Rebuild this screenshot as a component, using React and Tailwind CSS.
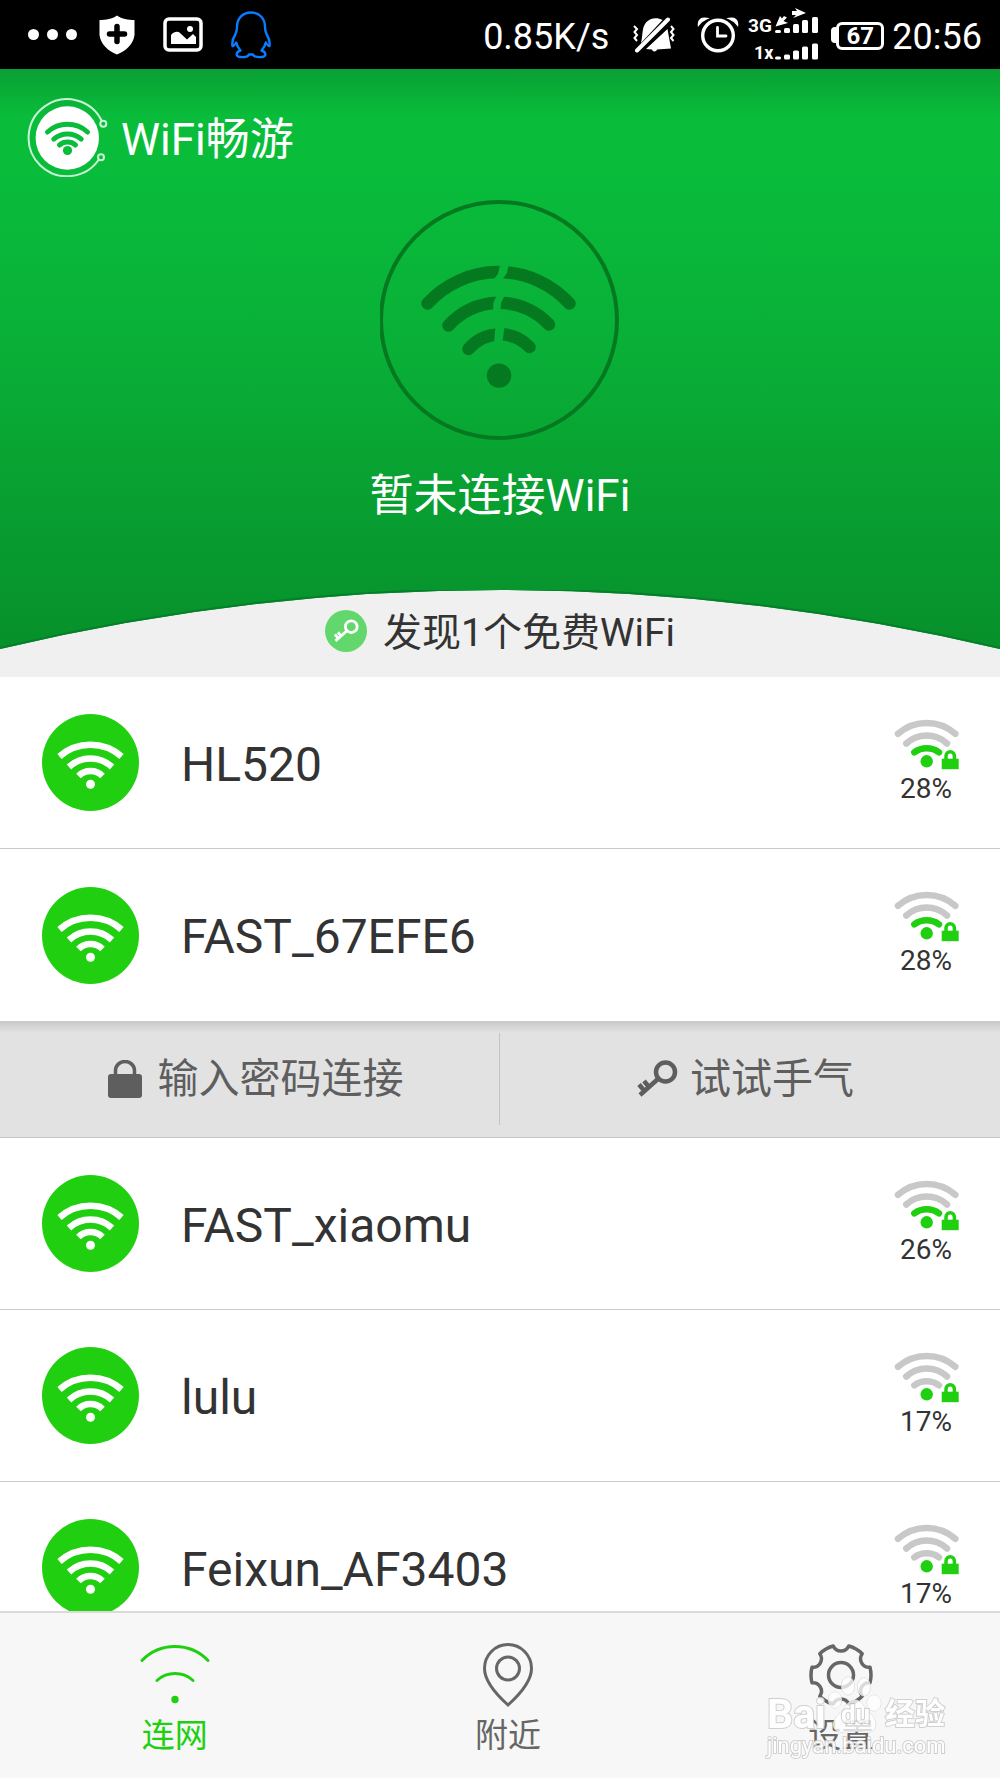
import { useState } from 'react';
import { clsx } from 'clsx';

const NETWORKS = [
  { ssid: 'HL520', strength: 28 },
  { ssid: 'FAST_67EFE6', strength: 28, expanded: true },
  { ssid: 'FAST_xiaomu', strength: 26 },
  { ssid: 'lulu', strength: 17 },
  { ssid: 'Feixun_AF3403', strength: 17 },
];

const TABS = [
  { id: 'connect', label: '连网', Icon: ConnectIcon },
  { id: 'nearby', label: '附近', Icon: PinIcon },
  { id: 'settings', label: '设置', Icon: GearIcon },
];

/* Status bar icons */

function ShieldIcon() {
  return (
    <svg className="w-9 h-10" viewBox="0 0 36 40" fill="none">
      <path d="M18 0.5C13 4 7 5 0.5 5V20C1.500 29 9 36 18 39.500C27 36 34.500 29 35.500 20V5C29 5 23 4 18 0.500Z" fill="#fff" />
      <path d="M18 11.500V26.500M10.500 19H25.500" stroke="#000" strokeWidth="5.500" strokeLinecap="round" />
    </svg>
  );
}

function PictureIcon() {
  return (
    <svg className="w-10 h-9" viewBox="0 0 40 36" fill="none">
      <rect x="2" y="2" width="36" height="31" rx="4" stroke="#fff" strokeWidth="3.5" />
      <path d="M8 27V18C11 14.500 15 14 17 16L24 22.500L30 17L33 20V27Z" fill="#fff" />
      <circle cx="27" cy="12" r="3" fill="#fff" />
    </svg>
  );
}

function PenguinIcon() {
  return (
    <svg className="w-10 h-12" viewBox="0 0 40 48" fill="none" stroke="#0a7cff" strokeWidth="2.4" strokeLinejoin="round">
      <path d="M20 1.500C11 1.500 6 8 6 16C6 19 5.500 21 4.500 23C2 27 0.800 31 1.500 35C2.500 35.500 4 33.500 5.200 31.500C6 35 7.500 37.500 9.500 39.500C5 41 4 45.500 9 46C13 46.400 17 46 18 43.500H22C23 46 27 46.400 31 46C36 45.500 35 41 30.500 39.500C32.500 37.500 34 35 34.800 31.500C36 33.500 37.500 35.500 38.500 35C39.200 31 38 27 35.500 23C34.500 21 34 19 34 16C34 8 29 1.500 20 1.500Z" />
    </svg>
  );
}

function MutedBellIcon() {
  return (
    <svg className="w-[42px] h-9" viewBox="0 0 42 36" fill="none" stroke="#fff">
      <path d="M8 26C10 19 8.500 11 13 5.500C17 1 24 0 29.500 3Z" fill="#fff" stroke="none" />
      <path d="M34.500 12L38 31.500L24 32.500C23.500 35 19.500 35 19 32.500L13 32Z" fill="#fff" stroke="none" />
      <path d="M4 33.500L35 2.500" strokeWidth="4" strokeLinecap="round" />
      <path d="M1 9L4 12L1.500 15L4 18L1.500 21L4 24M38 9L40.500 12L38 15L40.500 18L38 21L40.500 24" strokeWidth="2" />
    </svg>
  );
}

function AlarmIcon() {
  return (
    <svg className="w-[42px] h-9" viewBox="0 0 42 36" fill="none" stroke="#fff" strokeLinecap="round">
      <circle cx="21" cy="18.500" r="15.300" strokeWidth="3.400" />
      <path d="M20.500 10.500V19H29" strokeWidth="2.800" />
      <path d="M1.500 8C1 3 4 0.500 10 1.500C6 3 3.500 5.500 1.500 8ZM40.500 8C41 3 38 0.500 32 1.500C36 3 38.500 5.500 40.500 8Z" fill="#fff" strokeWidth="1.500" />
    </svg>
  );
}

function CellSignalIcon() {
  const xs = [28, 37, 46, 55, 65];
  return (
    <svg className="w-[72px] h-14" viewBox="0 0 72 56" fill="#fff">
      <text x="1" y="25" fontSize="19" fontWeight="700">3G</text>
      <text x="7" y="52" fontSize="18" fontWeight="700">1x</text>
      {[3, 5, 9, 13, 16].map((h, i) => (
        <rect key={i} x={xs[i]} y={26 - h} width="6" height={h} rx="1.500" />
      ))}
      {[3, 5, 9, 13, 16].map((h, i) => (
        <rect key={i} x={xs[i]} y={52.5 - h} width="6" height={h} rx="1.500" />
      ))}
      <path d="M33 9L28.500 19.500L41 16L36.500 14L40 10.500L37 9L35 11.500Z" />
      <path d="M48 1L59 6L46 11L49 8H45V4H50Z" />
    </svg>
  );
}

function Battery({ level }) {
  return (
    <div className="flex items-center">
      <span className="w-[5px] h-4 rounded-l bg-white" />
      <span className="flex items-center justify-center w-[48px] h-7 mt-1 mb-0.5 rounded-md border-3 border-white text-[24px] leading-none font-bold">
        {level}
      </span>
    </div>
  );
}

/* App icons */

function AppLogo() {
  return (
    <svg className="w-[82px] h-20" viewBox="0 0 82 80" fill="none">
      <g stroke="#c9f3d4" strokeWidth="2">
        <path d="M75 24.500A38.500 38.500 0 1 0 72.200 62" />
        <circle cx="76.300" cy="26.800" r="3" />
        <circle cx="74" cy="60.300" r="3" />
      </g>
      <circle cx="40.300" cy="41" r="31.700" fill="#fff" />
      <g stroke="#09bc3a" strokeWidth="5" strokeLinecap="round">
        <path d="M20.500 35A30 30 0 0 1 60.500 35" />
        <path d="M26.800 42.200A20.500 20.500 0 0 1 54.200 42.200" />
        <path d="M32.500 48A12.500 12.500 0 0 1 48.500 48" />
      </g>
      <circle cx="40.500" cy="53.500" r="4.600" fill="#09bc3a" />
    </svg>
  );
}

function BrokenWifi() {
  return (
    <svg className="w-60 h-60" viewBox="0 0 240 240" fill="none">
      <mask id="cracks" maskUnits="userSpaceOnUse" x="0" y="0" width="240" height="240">
        <rect width="240" height="240" fill="#fff" />
        <path d="M120 65H128.500L127 73L122 80H113L118 74ZM117 95H125L121 103L120.500 111H113L113.500 102ZM115.500 126H124.500L122.500 142H114Z" fill="#000" />
      </mask>
      <circle cx="119" cy="120" r="118" stroke="#04791f" strokeWidth="4" />
      <g stroke="#04791f" strokeWidth="12.500" strokeLinecap="round" mask="url(#cracks)">
        <path d="M47.500 103.500A96 96 0 0 1 189.500 103.500" />
        <path d="M68.500 125.500A68 68 0 0 1 169 124.500" />
        <path d="M88.500 149A41 41 0 0 1 149.500 147" />
      </g>
      <circle cx="119" cy="175.600" r="12.200" fill="#04791f" />
    </svg>
  );
}

function WifiBadge() {
  return (
    <svg className="w-[97px] h-[97px] shrink-0" viewBox="0 0 97 97" fill="none">
      <circle cx="48.500" cy="48.500" r="48.500" fill="#20d010" />
      <g stroke="#fff" strokeWidth="6.500">
        <path d="M17.500 42.500A47 47 0 0 1 79.500 42.500" />
        <path d="M27 53A31.600 31.600 0 0 1 70 53" />
        <path d="M36.500 62A17 17 0 0 1 60.500 62" />
      </g>
      <circle cx="48.500" cy="70.300" r="4.500" fill="#fff" />
    </svg>
  );
}

function SignalIcon({ strength }) {
  return (
    <svg className="w-[72px] h-14" viewBox="0 0 72 56" fill="none">
      <g stroke="#c8c8c8" strokeWidth="6.500" strokeLinecap="round">
        <path d="M8 18.800A43.500 43.500 0 0 1 65.300 18.800" />
        <path d="M16.300 28.500A30 30 0 0 1 57 28.500" />
        <path d="M24.300 37.300A21 21 0 0 1 49 37.300" stroke={strength > 20 ? '#20d010' : '#c8c8c8'} />
      </g>
      <circle cx="36.700" cy="46.300" r="6.200" fill="#20d010" />
      <rect x="51.700" y="43.700" width="17" height="10.500" fill="#20d010" />
      <path d="M56 45V41A4.200 4.200 0 0 1 64.400 41V45" stroke="#20d010" strokeWidth="3.500" />
    </svg>
  );
}

function KeyIcon({ className }) {
  return (
    <svg className={className} viewBox="0 0 42 38" fill="none" stroke="currentColor" strokeWidth="4.500">
      <circle cx="29.500" cy="12" r="9.500" />
      <path d="M22.500 18.500L4 35M13 27L8 21M8.500 31L3 24.500" />
    </svg>
  );
}

function LockIcon() {
  return (
    <svg className="w-[34px] h-[38px]" viewBox="0 0 34 38" fill="none">
      <rect y="14" width="34" height="24" rx="3" fill="#5e5e5e" />
      <path d="M7.500 16V10.500A9.500 9 0 0 1 26.500 10.500V16" stroke="#5e5e5e" strokeWidth="3.500" />
    </svg>
  );
}

/* Tab bar icons */

function ConnectIcon() {
  return (
    <svg className="w-[72px] h-16" viewBox="0 0 72 64" fill="none" stroke="currentColor" strokeWidth="3" strokeLinecap="round">
      <path d="M3 17.500A46 46 0 0 1 69 17.500" />
      <path d="M18 37.500A27 27 0 0 1 54 37.500" />
      <circle cx="36" cy="56.500" r="3.700" fill="currentColor" stroke="none" />
    </svg>
  );
}

function PinIcon() {
  return (
    <svg className="w-[72px] h-16" viewBox="0 0 72 64" fill="none" stroke="currentColor" strokeWidth="3">
      <path d="M36 62C26 53 12.500 38 12.500 25.500A23.500 24 0 0 1 59.500 25.500C59.500 38 46 53 36 62Z" />
      <circle cx="36" cy="25.500" r="11.500" />
    </svg>
  );
}

// six teeth: a scooped notch every 60 degrees, joined by arcs of the rim
function gearPath(cx, cy, r) {
  const at = (deg) => {
    const a = ((deg - 90) * Math.PI) / 180;
    return `${(cx + r * Math.cos(a)).toFixed(2)} ${(cy + r * Math.sin(a)).toFixed(2)}`;
  };
  let d = `M${at(-15)}`;
  for (let k = 0; k < 360; k += 60) {
    d += `A8.500 8.500 0 0 0 ${at(k + 15)}A${r} ${r} 0 0 1 ${at(k + 45)}`;
  }
  return `${d}Z`;
}

function GearIcon() {
  return (
    <svg className="w-[72px] h-16" viewBox="0 0 72 64" fill="none" stroke="currentColor" strokeWidth="3.500" strokeLinejoin="round">
      <path d={gearPath(36, 32, 30)} />
      <circle cx="36" cy="32" r="12.500" />
    </svg>
  );
}

function StatusBar() {
  return (
    <div className="flex items-center justify-between h-[69px] shrink-0 pl-7 pr-[18px] bg-black text-white">
      <div className="flex items-center">
        <div className="flex gap-2 mr-[22px]">
          <span className="w-[11px] h-[11px] rounded-full bg-white" />
          <span className="w-[11px] h-[11px] rounded-full bg-white" />
          <span className="w-[11px] h-[11px] rounded-full bg-white" />
        </div>
        <div className="flex items-center gap-7">
          <ShieldIcon />
          <PictureIcon />
          <PenguinIcon />
        </div>
      </div>
      <div className="flex items-center text-[36px] leading-10">
        <span className="mr-6 pt-1">0.85K/s</span>
        <MutedBellIcon />
        <span className="ml-[22px] mr-2">
          <AlarmIcon />
        </span>
        <CellSignalIcon />
        <span className="ml-3 mr-2">
          <Battery level={67} />
        </span>
        <span className="pt-1">20:56</span>
      </div>
    </div>
  );
}

function Hero() {
  return (
    <header className="shrink-0 bg-linear-to-b from-[#09a033] from-0% via-[#09bd3b] via-8% to-[#09bd3b] to-8% text-white">
      <div className="bg-linear-to-b from-transparent from-15% via-[#09b037] via-45% to-[#07902b] to-95%">
        <div className="flex items-center gap-3 pl-[27px] pt-7">
          <AppLogo />
          <h1 className="pt-1.5 text-[44px] leading-[56px]">WiFi畅游</h1>
        </div>
        <div className="flex flex-col items-center pt-[23px]">
          <BrokenWifi />
          <p className="mt-7 text-[44px] leading-[56px]">暂未连接WiFi</p>
        </div>
        <div className="relative mt-[66px] h-[87px]">
          <svg className="absolute inset-0 w-full h-full" viewBox="0 0 1000 87" preserveAspectRatio="none">
            <path d="M0 59Q500 -59 1000 59V87H0Z" fill="#f0f0f0" />
            <path d="M0 58Q500 -60 1000 58" fill="none" stroke="#05802a" strokeWidth="2" />
          </svg>
          <div className="relative flex items-center justify-center gap-4 h-[82px] text-[#333]">
            <span className="flex items-center justify-center w-[42px] h-[42px] rounded-full bg-[#62d76c] text-white">
              <KeyIcon className="w-[26px] h-6" />
            </span>
            <span className="pt-1 text-[39px] leading-[48px]">发现1个免费WiFi</span>
          </div>
        </div>
      </div>
    </header>
  );
}

function NetworkActions() {
  return (
    <div className="grid grid-cols-2 h-[117px] bg-linear-to-b from-[#c8c8c8] from-0% to-[#e2e2e2] to-10% border-b border-[#c4c4c4] text-[#5e5e5e] text-[41px] leading-[56px]">
      <button type="button" className="flex items-center justify-center gap-4 my-3 pl-3 border-r border-[#c4c4c4]">
        <LockIcon />
        输入密码连接
      </button>
      <button type="button" className="flex items-center justify-center gap-3 my-3 pr-2.5">
        <KeyIcon className="w-[42px] h-[38px]" />
        试试手气
      </button>
    </div>
  );
}

function NetworkRow({ network }) {
  return (
    <li>
      <button
        type="button"
        className={clsx(
          'flex items-center w-full h-[172px] pl-[42px] pr-[38px] text-left text-[#333]',
          !network.expanded && 'border-b border-[#cacaca]',
        )}
      >
        <WifiBadge />
        <span className="flex-1 ml-[42px] pt-1 text-[48px] leading-[56px]">{network.ssid}</span>
        <span className="flex flex-col items-center pb-1">
          <SignalIcon strength={network.strength} />
          <span className="text-[28px] leading-9">{network.strength}%</span>
        </span>
      </button>
      {network.expanded && <NetworkActions />}
    </li>
  );
}

function TabBar({ active, onChange }) {
  return (
    <nav className="grid grid-cols-3 h-[167px] shrink-0 bg-[#f7f7f7] border-t-2 border-[#dadada]">
      {TABS.map(({ id, label, Icon }) => (
        <button
          key={id}
          type="button"
          onClick={() => onChange(id)}
          className={clsx('flex flex-col items-center pl-4 pt-[30px]', active === id ? 'text-[#20d010]' : 'text-[#666]')}
        >
          <Icon />
          <span className="mt-[9px] text-[33px] leading-10">{label}</span>
        </button>
      ))}
    </nav>
  );
}

function Watermark() {
  return (
    <div className="absolute right-[55px] bottom-[20px] w-[178px] text-white opacity-90 pointer-events-none [paint-order:stroke_fill] [-webkit-text-stroke:2px_#cccccc]">
      <svg className="absolute left-[60px] -top-[18px] w-[56px] h-[58px]" viewBox="0 0 56 58" fill="#fff" fillOpacity="0.85" stroke="#d0d0d0">
        <ellipse cx="8" cy="24" rx="6.500" ry="8" />
        <ellipse cx="21" cy="10" rx="6.500" ry="9" />
        <ellipse cx="37" cy="11" rx="6.500" ry="9" />
        <ellipse cx="47" cy="27" rx="7" ry="8" />
        <path d="M28 24C34 24 37 31 43 37C52 45 50 57 40 56C32 55 24 55 16 56C5 57 3 46 12 38C19 31 21 24 28 24Z" />
      </svg>
      <div className="relative flex items-center justify-between text-[41px] leading-10 font-bold">
        <span>Bai</span>
        <span className="text-[26px]">du</span>
        <span className="text-[30px]">经验</span>
      </div>
      <div className="relative text-[22px] leading-6">jingyan.baidu.com</div>
    </div>
  );
}

export default function App() {
  const [tab, setTab] = useState('connect');

  return (
    <div className="relative flex flex-col h-screen overflow-hidden bg-white [font-family:Roboto,'Noto_Sans_CJK_SC',sans-serif]">
      <StatusBar />
      <Hero />
      <main className="flex-1 min-h-0 overflow-hidden">
        <ul>
          {NETWORKS.map((network) => (
            <NetworkRow key={network.ssid} network={network} />
          ))}
        </ul>
      </main>
      <TabBar active={tab} onChange={setTab} />
      <Watermark />
    </div>
  );
}
